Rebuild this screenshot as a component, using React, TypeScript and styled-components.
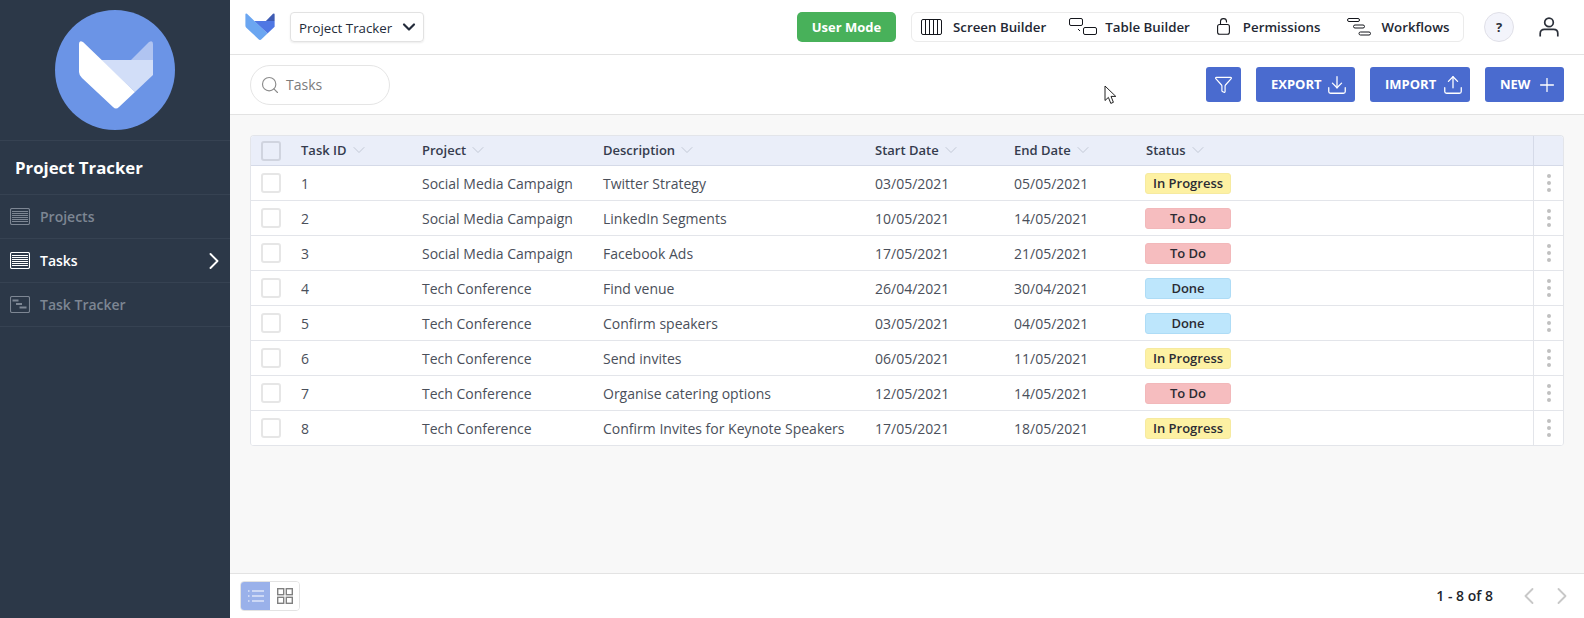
import React from "react";
import styled, { createGlobalStyle } from "styled-components";
import {
  ChevronDown,
  ChevronLeft,
  ChevronRight,
  Download,
  Filter,
  Plus,
  Search,
  Upload,
} from "lucide-react";

const GlobalStyle = createGlobalStyle`
  html, body {
    margin: 0;
    height: 100%;
    overflow: hidden;
    font-family: "Open Sans", "Liberation Sans", sans-serif;
  }
  * { box-sizing: border-box; }
`;

type Status = "In Progress" | "To Do" | "Done";

const tasks: [number, string, string, string, string, Status][] = [
  [1, "Social Media Campaign", "Twitter Strategy", "03/05/2021", "05/05/2021", "In Progress"],
  [2, "Social Media Campaign", "LinkedIn Segments", "10/05/2021", "14/05/2021", "To Do"],
  [3, "Social Media Campaign", "Facebook Ads", "17/05/2021", "21/05/2021", "To Do"],
  [4, "Tech Conference", "Find venue", "26/04/2021", "30/04/2021", "Done"],
  [5, "Tech Conference", "Confirm speakers", "03/05/2021", "04/05/2021", "Done"],
  [6, "Tech Conference", "Send invites", "06/05/2021", "11/05/2021", "In Progress"],
  [7, "Tech Conference", "Organise catering options", "12/05/2021", "14/05/2021", "To Do"],
  [8, "Tech Conference", "Confirm Invites for Keynote Speakers", "17/05/2021", "18/05/2021", "In Progress"],
];

const columns = ["Task ID", "Project", "Description", "Start Date", "End Date", "Status"];

const FoxLogo = ({ size, left, mid, ear }: { size: number; left: string; mid: string; ear: string }) => (
  <svg width={size} height={(size * 70) / 76} viewBox="0 0 76 70">
    <path d="M23 20H75V35L57 52Z" fill={mid} />
    <path d="M53 20L71 2Q75 0 75 4V20Z" fill={ear} />
    <path d="M1 4Q1 0 5 2L57 52L41 67Q38 70 35 67L4 38Q1 35 1 32Z" fill={left} />
  </svg>
);

const StripesIcon = ({ color }: { color: string }) => (
  <svg width="20" height="17" viewBox="0 0 20 17" fill="none" stroke={color}>
    <rect x="0.5" y="0.5" width="19" height="16" rx="1.5" strokeWidth="1.1" />
    <path d="M2 3.5H18M2 5.5H18M2 7.5H18M2 9.5H18M2 11.5H18M2 13.5H18" />
  </svg>
);

const TrackerIcon = ({ color }: { color: string }) => (
  <svg width="20" height="17" viewBox="0 0 20 17" fill="none" stroke={color}>
    <rect x="0.5" y="0.5" width="19" height="16" rx="1.5" strokeWidth="1.1" />
    <path d="M2.5 4.5H8.5M6 8H12M9.5 11.5H16.5" strokeWidth="2" />
  </svg>
);

const ScreenIcon = () => (
  <svg width="21" height="16" viewBox="0 0 21 16" fill="none" stroke="#14161c">
    <rect x="0.5" y="0.5" width="20" height="15" rx="1.5" />
    <path d="M4.5 1V15M8.5 1V15M12.5 1V15M16.5 1V15" />
  </svg>
);

const TableIcon = () => (
  <svg width="28" height="18" viewBox="0 0 28 18" fill="none" stroke="#14161c">
    <rect x="0.5" y="0.5" width="13" height="7" rx="1.5" />
    <rect x="14.5" y="9.5" width="13" height="7" rx="1.5" />
    <path d="M9 11L11 13" />
  </svg>
);

const LockIcon = () => (
  <svg width="13" height="17" viewBox="0 0 13 17" fill="none" stroke="#14161c" strokeWidth="1.1">
    <rect x="0.6" y="6.5" width="11.8" height="9.8" rx="2" />
    <path d="M3.5 6.5V3.5C3.5 1.5 5 .6 6.5 .6S9.5 1.5 9.5 3.5V4.5" />
  </svg>
);

const WorkflowIcon = () => (
  <svg width="24" height="18" viewBox="0 0 24 18" fill="none" stroke="#14161c">
    <rect x="0.5" y="0.5" width="12" height="3" rx="1.5" />
    <rect x="6.5" y="7" width="11" height="3" rx="1.5" />
    <rect x="12" y="14" width="11.5" height="3" rx="1.5" />
  </svg>
);

const PersonIcon = () => (
  <svg width="20" height="20" viewBox="0 0 20 20" fill="none" stroke="#2b303a" strokeWidth="1.7">
    <circle cx="10" cy="5.4" r="4.3" />
    <path d="M1.2 19.5V16.5C1.2 13.8 3 12.4 5.4 12.4H14.6C17 12.4 18.8 13.8 18.8 16.5V19.5" />
  </svg>
);

const ListIcon = () => (
  <svg width="16" height="12" viewBox="0 0 16 12" fill="none" stroke="#fff" strokeWidth="1.2">
    <path d="M0 1H1.5M0 6H1.5M0 11H1.5M4 1H16M4 6H16M4 11H16" />
  </svg>
);

const GridIcon = () => (
  <svg width="16" height="16" viewBox="0 0 16 16" fill="none" stroke="#808080" strokeWidth="1.4">
    <rect x="0.7" y="0.7" width="6" height="6" />
    <rect x="9.3" y="0.7" width="6" height="6" />
    <rect x="0.7" y="9.3" width="6" height="6" />
    <rect x="9.3" y="9.3" width="6" height="6" />
  </svg>
);

const App = () => {
  return (
    <Page>
      <GlobalStyle />
      <Sidebar>
        <LogoArea>
          <LogoCircle>
            <FoxLogo size={76} left="#ffffff" mid="#d2def8" ear="#b0c4f1" />
          </LogoCircle>
        </LogoArea>
        <AppTitle>Project Tracker</AppTitle>
        <NavItem>
          <StripesIcon color="#7d8693" />
          Projects
        </NavItem>
        <NavItem $active>
          <StripesIcon color="#ffffff" />
          Tasks
          <NavArrow>
            <ChevronRight size={28} strokeWidth={1.6} />
          </NavArrow>
        </NavItem>
        <NavItem>
          <TrackerIcon color="#7d8693" />
          Task Tracker
        </NavItem>
      </Sidebar>

      <Main>
        <TopBar>
          <FoxLogo size={30} left="#6ba6f1" mid="#4f77e3" ear="#3f5cb3" />
          <AppSelect>
            <span>Project Tracker</span>
            <ChevronDown size={20} strokeWidth={2.6} color="#232b3a" />
          </AppSelect>
          <UserMode>User Mode</UserMode>
          <BuilderGroup>
            <BuilderLink $gap={11} $before={0}>
              <ScreenIcon />
              Screen Builder
            </BuilderLink>
            <BuilderLink $gap={8} $before={23}>
              <TableIcon />
              Table Builder
            </BuilderLink>
            <BuilderLink $gap={13} $before={27}>
              <LockIcon />
              Permissions
            </BuilderLink>
            <BuilderLink $gap={11} $before={26}>
              <WorkflowIcon />
              Workflows
            </BuilderLink>
          </BuilderGroup>
          <HelpButton>?</HelpButton>
          <PersonSlot>
            <PersonIcon />
          </PersonSlot>
        </TopBar>

        <Toolbar>
          <SearchBox>
            <Search size={20} strokeWidth={1.4} color="#8c8c8c" />
            <SearchText>Tasks</SearchText>
          </SearchBox>
          <Actions>
            <FilterButton>
              <Filter size={19} strokeWidth={1.5} />
            </FilterButton>
            <ActionButton $width={99} $gap={4}>
              <span>EXPORT</span>
              <Download size={22} strokeWidth={1.4} />
            </ActionButton>
            <ActionButton $width={100} $gap={6}>
              <span>IMPORT</span>
              <Upload size={22} strokeWidth={1.4} />
            </ActionButton>
            <ActionButton $width={79} $gap={6}>
              <span>NEW</span>
              <Plus size={22} strokeWidth={1.4} />
            </ActionButton>
          </Actions>
        </Toolbar>

        <Content>
          <Table>
            <HeadRow>
              <CheckCell>
                <Checkbox $head />
              </CheckCell>
              {columns.map((c) => (
                <HeadCell key={c}>
                  {c}
                  <ChevronDown size={20} strokeWidth={1.2} color="#c3c9d6" />
                </HeadCell>
              ))}
              <span />
              <MenuCell $head />
            </HeadRow>
            {tasks.map(([id, project, description, start, end, status]) => (
              <Row key={id}>
                <CheckCell>
                  <Checkbox />
                </CheckCell>
                <Cell>{id}</Cell>
                <Cell>{project}</Cell>
                <Cell>{description}</Cell>
                <Cell>{start}</Cell>
                <Cell>{end}</Cell>
                <Cell>
                  <Badge $status={status}>{status}</Badge>
                </Cell>
                <span />
                <MenuCell>
                  <Dot />
                  <Dot />
                  <Dot />
                </MenuCell>
              </Row>
            ))}
          </Table>
        </Content>

        <Footer>
          <ViewToggle>
            <ViewOption $active>
              <ListIcon />
            </ViewOption>
            <ViewOption>
              <GridIcon />
            </ViewOption>
          </ViewToggle>
          <Pager>
            <PageCount>1 - 8 of 8</PageCount>
            <ChevronLeft size={28} strokeWidth={1.6} color="#c8c8c8" />
            <ChevronRight size={28} strokeWidth={1.6} color="#c8c8c8" />
          </Pager>
        </Footer>
      </Main>

      <Cursor width="14" height="20" viewBox="0 0 14 20">
        <path
          d="M1 1V15.5L4.4 12.4L6.8 18.4L9.4 17.3L7 11.4H11.8Z"
          fill="#fff"
          stroke="#222"
          strokeWidth="1"
        />
      </Cursor>
    </Page>
  );
};

export default App;

const tableColumns = "50px 121px 181px 272px 139px 132px 100px 1fr 30px";

const Page = styled.div`
  position: relative;
  display: flex;
  width: 100%;
  height: 100vh;
  overflow: hidden;
  color: #3c4250;
`;

const Sidebar = styled.aside`
  width: 230px;
  flex-shrink: 0;
  background: #2c3848;
`;

const LogoArea = styled.div`
  height: 141px;
  padding-top: 10px;
  display: flex;
  justify-content: center;
  border-bottom: 1px solid #364252;
`;

const LogoCircle = styled.div`
  width: 120px;
  height: 120px;
  border-radius: 50%;
  background: #6b94e6;
  display: flex;
  align-items: center;
  justify-content: center;
  padding: 9px 0 0 2px;
`;

const AppTitle = styled.div`
  height: 54px;
  padding-left: 15px;
  display: flex;
  align-items: center;
  color: #ffffff;
  font-size: 16.8px;
  font-weight: 700;
  border-bottom: 1px solid #364252;
`;

const NavItem = styled.div<{ $active?: boolean }>`
  height: 44px;
  padding: 0 10px;
  display: flex;
  align-items: center;
  gap: 10px;
  font-size: 14px;
  font-weight: 600;
  color: ${({ $active }) => ($active ? "#ffffff" : "#7d8693")};
  border-bottom: 1px solid #364252;
`;

const NavArrow = styled.span`
  margin-left: auto;
  margin-right: -8px;
  display: flex;
  color: #ffffff;
`;

const Main = styled.main`
  flex: 1;
  min-width: 0;
  display: flex;
  flex-direction: column;
  background: #f8f8f8;
`;

const TopBar = styled.header`
  height: 55px;
  flex-shrink: 0;
  padding: 0 25px 1px 15px;
  display: flex;
  align-items: center;
  background: #ffffff;
  border-bottom: 1px solid #e3e3e3;
`;

const AppSelect = styled.div`
  width: 134px;
  height: 30px;
  margin-left: 15px;
  padding: 0 4px 0 8px;
  display: flex;
  align-items: center;
  justify-content: space-between;
  font-size: 13.3px;
  color: #232b3a;
  border: 1px solid #e2e2e2;
  border-radius: 4px;
  box-shadow: 0 1px 2px rgba(0, 0, 0, 0.08);

  span {
    padding-top: 2px;
  }
`;

const UserMode = styled.div`
  width: 99px;
  height: 30px;
  margin-left: auto;
  display: flex;
  align-items: center;
  justify-content: center;
  font-size: 13px;
  font-weight: 700;
  color: #ffffff;
  background: #48b15a;
  border-radius: 5px;
`;

const BuilderGroup = styled.nav`
  width: 553px;
  height: 30px;
  margin-left: 15px;
  padding: 0 0 0 9px;
  display: flex;
  align-items: center;
  border: 1px solid #ebebeb;
  border-radius: 6px;
`;

const BuilderLink = styled.div<{ $gap: number; $before: number }>`
  margin-left: ${({ $before }) => $before}px;
  display: flex;
  align-items: center;
  gap: ${({ $gap }) => $gap}px;
  font-size: 13.3px;
  font-weight: 600;
  color: #232733;
  white-space: nowrap;
`;

const HelpButton = styled.div`
  width: 30px;
  height: 30px;
  margin-left: 20px;
  display: flex;
  align-items: center;
  justify-content: center;
  font-size: 13px;
  font-weight: 700;
  color: #2b303a;
  background: #f3f4fb;
  border: 1px solid #e0e0e8;
  border-radius: 50%;
`;

const PersonSlot = styled.div`
  margin-left: 25px;
  display: flex;
`;

const Toolbar = styled.div`
  height: 60px;
  flex-shrink: 0;
  padding: 0 20px;
  display: flex;
  align-items: center;
  justify-content: space-between;
  background: #ffffff;
  border-bottom: 1px solid #e3e3e3;
`;

const SearchBox = styled.div`
  width: 140px;
  height: 40px;
  margin-top: 1px;
  padding-left: 9px;
  display: flex;
  align-items: center;
  gap: 6px;
  font-size: 14px;
  color: #7c7c7c;
  border: 1px solid #e5e5e5;
  border-radius: 20px;
`;

const SearchText = styled.span`
  padding-bottom: 2px;
`;

const Actions = styled.div`
  display: flex;
  gap: 15px;
`;

const FilterButton = styled.div`
  width: 35px;
  height: 35px;
  display: flex;
  align-items: center;
  justify-content: center;
  color: #ffffff;
  background: #4a6bcf;
  border-radius: 3px;
`;

const ActionButton = styled.div<{ $width: number; $gap: number }>`
  width: ${({ $width }) => $width}px;
  height: 35px;
  padding-left: 15px;
  display: flex;
  align-items: center;
  gap: ${({ $gap }) => $gap}px;
  font-size: 13px;
  font-weight: 700;
  color: #ffffff;
  background: #4a6bcf;
  border-radius: 3px;

  span {
    padding-bottom: 2px;
  }
`;

const Content = styled.div`
  flex: 1;
  min-height: 0;
  padding: 20px 20px 0;
`;

const Table = styled.div`
  border: 1px solid #e3e5ea;
  border-bottom: none;
  border-radius: 4px;
  background: #ffffff;
  overflow: hidden;
`;

const HeadRow = styled.div`
  display: grid;
  grid-template-columns: ${tableColumns};
  height: 30px;
  align-items: center;
  background: #eaeef9;
  border-bottom: 1px solid #d5dae8;
`;

const Row = styled.div`
  display: grid;
  grid-template-columns: ${tableColumns};
  height: 35px;
  align-items: center;
  border-bottom: 1px solid #e3e5ea;
`;

const CheckCell = styled.div`
  padding-left: 10px;
  display: flex;
`;

const Checkbox = styled.div<{ $head?: boolean }>`
  width: 20px;
  height: 20px;
  background: ${({ $head }) => ($head ? "#eaeef9" : "#ffffff")};
  border: 2px solid ${({ $head }) => ($head ? "#d0d4df" : "#e6e6e6")};
  border-radius: 3px;
`;

const HeadCell = styled.div`
  padding-bottom: 2px;
  display: flex;
  align-items: center;
  gap: 2px;
  font-size: 13px;
  font-weight: 600;
  color: #353c4e;
  white-space: nowrap;
`;

const Cell = styled.div`
  font-size: 14px;
  color: #4a4f5a;
  white-space: nowrap;
`;

const badgeColors: Record<Status, { bg: string; border: string }> = {
  "In Progress": { bg: "#fdf1a3", border: "#f6eaa0" },
  "To Do": { bg: "#f6bdbf", border: "#f2b8ba" },
  Done: { bg: "#bde6fc", border: "#aedcf6" },
};

const Badge = styled.div<{ $status: Status }>`
  width: 86px;
  height: 21px;
  margin-left: -1px;
  display: flex;
  align-items: center;
  justify-content: center;
  font-size: 13px;
  font-weight: 600;
  color: #2b2b33;
  background: ${({ $status }) => badgeColors[$status].bg};
  border: 1px solid ${({ $status }) => badgeColors[$status].border};
  border-radius: 3px;
`;

const MenuCell = styled.div<{ $head?: boolean }>`
  height: 100%;
  display: flex;
  flex-direction: column;
  align-items: center;
  justify-content: center;
  gap: 3px;
  border-left: 1px solid ${({ $head }) => ($head ? "#d5dae8" : "#e3e5ea")};
`;

const Dot = styled.span`
  width: 4px;
  height: 4px;
  border-radius: 50%;
  background: #c0c0c0;
`;

const Footer = styled.footer`
  height: 45px;
  flex-shrink: 0;
  padding: 0 8px 7px 10px;
  display: flex;
  align-items: flex-end;
  justify-content: space-between;
  background: #ffffff;
  border-top: 1px solid #e3e3e3;
`;

const ViewToggle = styled.div`
  height: 30px;
  display: flex;
  border: 1px solid #e3e3e3;
  border-radius: 4px;
  overflow: hidden;
`;

const ViewOption = styled.div<{ $active?: boolean }>`
  width: 29px;
  display: flex;
  align-items: center;
  justify-content: center;
  background: ${({ $active }) => ($active ? "#9ab1ea" : "#ffffff")};
`;

const Pager = styled.div`
  height: 30px;
  display: flex;
  align-items: center;
  gap: 5px;
`;

const PageCount = styled.span`
  margin-right: 17px;
  padding-bottom: 2px;
  font-size: 14px;
  font-weight: 600;
  color: #22252c;
`;

const Cursor = styled.svg`
  position: absolute;
  left: 1104px;
  top: 85px;
`;
